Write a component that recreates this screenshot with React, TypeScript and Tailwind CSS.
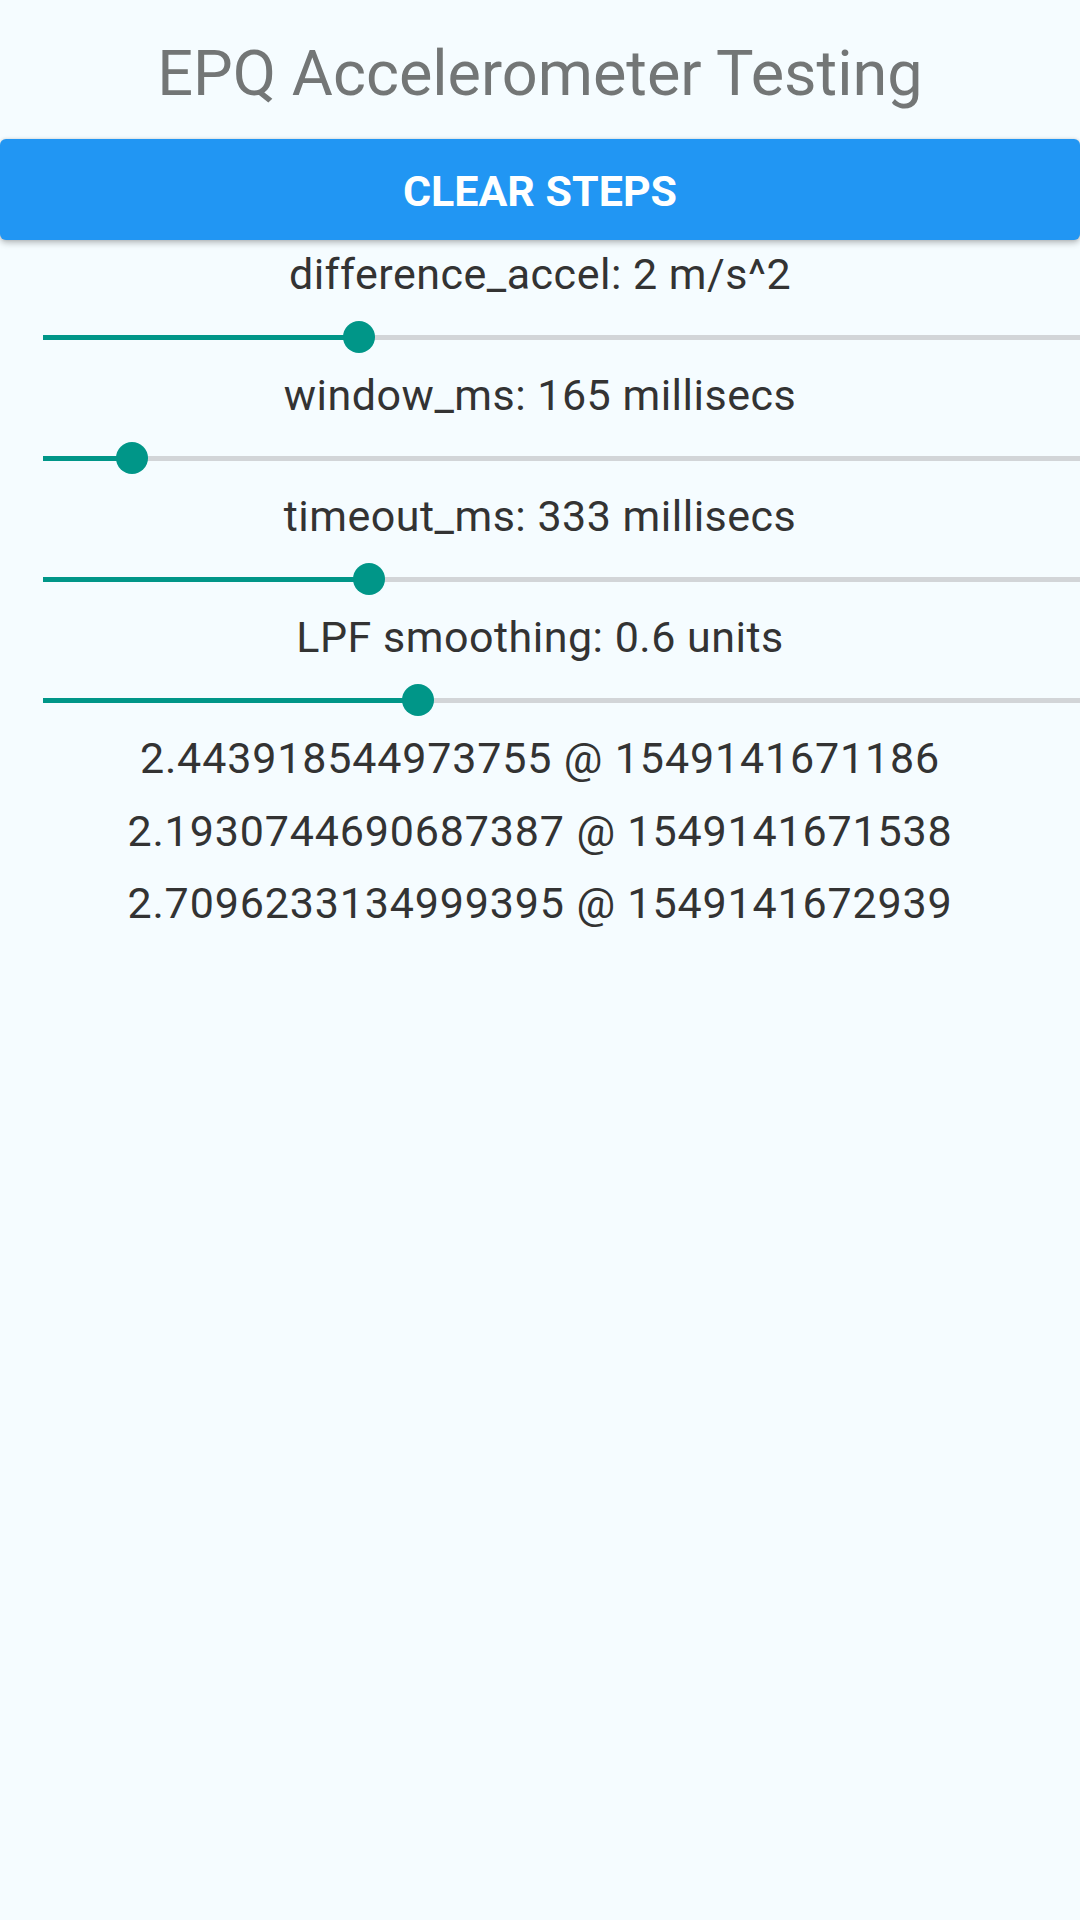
import React from "react";

const sliders = [
  { label: "difference_accel: 2 m/s^2", pos: 316 },
  { label: "window_ms: 165 millisecs", pos: 89 },
  { label: "timeout_ms: 333 millisecs", pos: 326 },
  { label: "LPF smoothing: 0.6 units", pos: 375 },
];

const steps = [
  "2.443918544973755 @ 1549141671186",
  "2.1930744690687387 @ 1549141671538",
  "2.7096233134999395 @ 1549141672939",
];

function Slider({ pos }: { pos: number }) {
  return (
    <div className="h-[72px] pt-[4px] flex items-center pl-[43px]">
      <div className="relative flex-1 h-[5px] bg-[#d2d5d8]">
        <div className="absolute left-0 top-0 h-[5px] bg-[#009688]" style={{ width: pos }} />
        <div
          className="absolute top-1/2 w-[32px] h-[32px] -mt-[16px] -ml-[16px] rounded-full bg-[#009688]"
          style={{ left: pos }}
        />
      </div>
    </div>
  );
}

export default function App() {
  return (
    <div
      className="min-h-[1920px] w-full bg-[#F5FCFF] flex flex-col"
      style={{ fontFamily: "Roboto, 'Noto Sans', sans-serif" }}
    >
      <div className="pt-[37px] text-center text-[63px] leading-[74px] text-[#737676]">
        EPQ Accelerometer Testing
      </div>
      <div className="mt-[28px] h-[101px] pt-[4px] flex items-center justify-center rounded-[6px] bg-[#2196F3] shadow-[0_3px_6px_rgba(0,0,0,0.25),0_0_3px_rgba(0,0,0,0.12)]">
        <span className="text-white text-[43px] leading-[49px] font-bold uppercase">Clear Steps</span>
      </div>
      <div className="mt-[10px] flex flex-col">
        {sliders.map((s) => (
          <div key={s.label} className="flex flex-col">
            <div className="text-center text-[43px] leading-[49px] tracking-[0.5px] text-[#333333]">
              {s.label}
            </div>
            <Slider pos={s.pos} />
          </div>
        ))}
      </div>
      <div className="flex flex-col gap-[23.5px]">
        {steps.map((t) => (
          <div key={t} className="text-center text-[43px] leading-[49px] tracking-[0.85px] text-[#333333]">
            {t}
          </div>
        ))}
      </div>
    </div>
  );
}
